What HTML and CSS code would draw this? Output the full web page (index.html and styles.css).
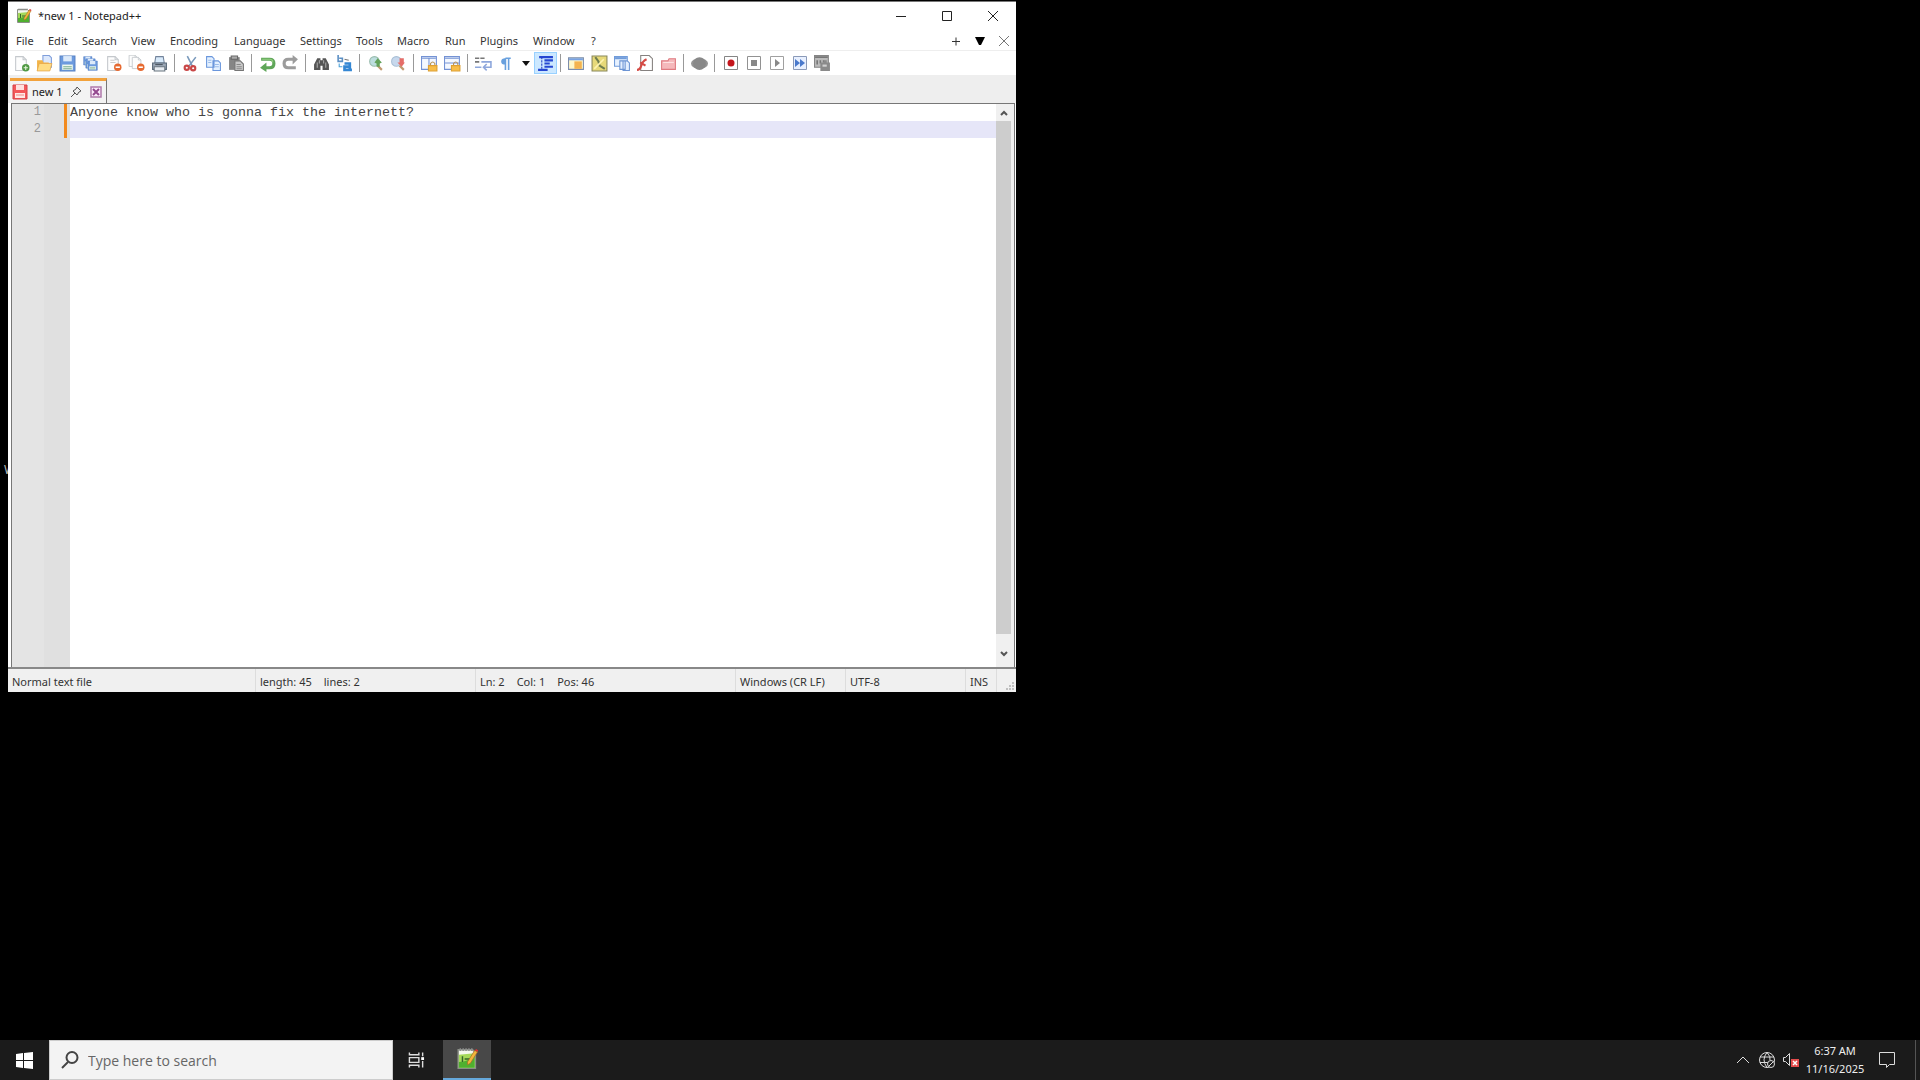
FILE: index.html
```html
<!DOCTYPE html>
<html lang="en">
<head>
<meta charset="utf-8">
<title>*new 1 - Notepad++</title>
<link rel="stylesheet" href="styles.css">
</head>
<body>
<svg class="sprite" aria-hidden="true">
  <symbol id="npp" viewBox="0 0 16 16"><path d="M1.500 1.500h10l2 2v11h-12z" fill="#f4f7ee" stroke="#8a8f86"/><path d="M3 .500v2M5 .500v2M7 .500v2M9 .500v2M11 .500v2" stroke="#8d8d8d"/><path d="M2 5l11-1v10H2z" fill="#a5d95a"/><path d="M2 10q7 0 11-5v9H2z" fill="#4fb02f"/><path d="M4.500 6v4M6 8h4" stroke="#35662a"/><path d="M8 10l5-8 2 1-5 8-2 1z" fill="#f3b53a" stroke="#a56b2a" stroke-width=".5"/><path d="M13 2l1-1 1.500 1-.500 1z" fill="#d33"/></symbol>
  <symbol id="page" viewBox="0 0 16 16"><path d="M2.500 1.500h7l3 3v10h-10z" fill="#fdfdfd" stroke="#c4c8cc"/><path d="M9.500 1.500v3h3" fill="none" stroke="#c4c8cc"/></symbol>
  <symbol id="floppy" viewBox="0 0 16 16"><path d="M1 1h14v14H1z" fill="#6c9ade" stroke="#5580c4"/><path d="M4 1h8v5H4z" fill="#dceafa"/><path d="M3 9h10v5H3z" fill="#eef8ee"/><path d="M4 11h8M4 13h8" stroke="#79ac91"/></symbol>
  <symbol id="copy" viewBox="0 0 16 16"><path d="M1.500 1.500h5l2 2v8h-7zM7.500 5.500h5l2 2v7h-7z" fill="#e3f0ff" stroke="#6a96dc"/><path d="M3 5h3M3 7h3M9 9h4M9 11h4" stroke="#9abbea"/></symbol>
  <symbol id="lock" viewBox="0 0 16 16"><path d="M9 10V8q2-3 4 0v2" fill="none" stroke="#b99355"/><path d="M7 10h8v5H7z" fill="#f8bd47" stroke="#dda032"/></symbol>
</svg>

<div class="screen">
<main class="desktop">
  <span class="shortcut">W</span>
  <section class="window" aria-label="Notepad++">
    <header class="titlebar">
      <svg class="app-icon"><use href="#npp"/></svg>
      <h1>*new 1 - Notepad++</h1>
      <div class="caption-buttons">
        <button aria-label="Minimize"><svg viewBox="0 0 12 12"><path d="M1 6.500h10"/></svg></button>
        <button aria-label="Maximize"><svg viewBox="0 0 12 12"><path d="M1.500 1.500h9v9h-9z"/></svg></button>
        <button aria-label="Close"><svg viewBox="0 0 12 12"><path d="M1 1l10 10M11 1L1 11"/></svg></button>
      </div>
    </header>

    <nav class="menubar">
      <div class="menus">
        <button>File</button><button>Edit</button><button>Search</button><button>View</button><button>Encoding</button><button>Language</button><button>Settings</button><button>Tools</button><button>Macro</button><button>Run</button><button>Plugins</button><button>Window</button><button>?</button>
      </div>
      <div class="tab-actions">
        <button aria-label="New tab"><svg viewBox="0 0 10 10"><path d="M1 5.500h8M5 1.500v8" stroke="#333"/></svg></button>
        <button aria-label="Tab list"><svg viewBox="0 0 10 10"><path d="M0 1h10L6 9H4z" fill="#000"/></svg></button>
        <button aria-label="Close tab"><svg viewBox="0 0 10 10"><path d="M0 0l10 10M10 0L0 10" stroke="#777"/></svg></button>
      </div>
    </nav>

    <div class="toolbar">
      <button aria-label="New"><svg viewBox="0 0 16 16"><use href="#page"/><circle cx="12" cy="12" r="3.500" fill="#509943"/><path d="M10 12h4M12 10v4" stroke="#e8f7de"/></svg></button>
      <button aria-label="Open"><svg viewBox="0 0 16 16"><path d="M6.500.500h6l2 2v9h-8z" fill="#dce8fc" stroke="#7f9edb"/><path d="M1 5h5l1 2h5v8H1z" fill="#f3b448"/><path d="M1 15l2-7h12l-2 7z" fill="#ffdc83" stroke="#e6a546" stroke-width=".7"/></svg></button>
      <button aria-label="Save"><svg><use href="#floppy"/></svg></button>
      <button aria-label="Save all"><svg viewBox="0 0 16 16"><use href="#floppy" x="1" y="1" width="9" height="9"/><use href="#floppy" x="3" y="3" width="10" height="10"/><use href="#floppy" x="5" y="5" width="10" height="10"/></svg></button>
      <button aria-label="Close file"><svg viewBox="0 0 16 16"><use href="#page"/><path d="M5 5h4M5 7h5" stroke="#ccc"/><circle cx="12" cy="11.500" r="3.500" fill="#e66a31"/><path d="M10 11.500h4" stroke="#fff" stroke-width="1.500"/></svg></button>
      <button aria-label="Close all files"><svg viewBox="0 0 16 16"><use href="#page" x="-1" y="-1" width="13" height="13"/><use href="#page" x="2" y="1" width="13" height="13"/><circle cx="12" cy="11.500" r="3.500" fill="#e66a31"/><path d="M10 11.500h4" stroke="#fff" stroke-width="1.500"/></svg></button>
      <button aria-label="Print"><svg viewBox="0 0 16 16"><path d="M4.500 1.500h7l1 6h-9z" fill="#d8eafa" stroke="#73849b"/><path d="M1.500 7.500h13v6h-13z" fill="#9ba7b6" stroke="#586878"/><path d="M3 11h10v4H3z" fill="#e8edf2" stroke="#68747f"/><path d="M4 9h7" stroke="#4c5660"/></svg></button>
      <i></i>
      <button aria-label="Cut"><svg viewBox="0 0 16 16"><path d="M5 1l5 10M13 2L6 11" stroke="#7a9abc" stroke-width="1.500"/><circle cx="4.500" cy="12" r="2" fill="none" stroke="#c94747" stroke-width="2"/><circle cx="10.500" cy="12.500" r="2" fill="none" stroke="#c94747" stroke-width="2"/></svg></button>
      <button aria-label="Copy"><svg><use href="#copy"/></svg></button>
      <button aria-label="Paste"><svg viewBox="0 0 16 16"><path d="M1 2h10v12H1z" fill="#858585"/><path d="M3 1h6v3H3z" fill="#aaa" stroke="#666"/><path d="M6.500 5.500h5l3 3v6h-8z" fill="#c9c9c9" stroke="#757575"/><path d="M8 9h4M8 11h5M8 13h5" stroke="#888"/></svg></button>
      <i></i>
      <button aria-label="Undo"><svg viewBox="0 0 16 16"><path d="M2 4h8q4 0 4 4t-4 4H6" fill="none" stroke="#5fa659" stroke-width="3"/><path d="M1 12l6-5v9z" fill="#5fa659"/><path d="M3 4h7q3 0 3 3" fill="none" stroke="#95cf81"/></svg></button>
      <button aria-label="Redo"><svg viewBox="0 0 16 16"><path d="M13 12H6q-4 0-4-4t4-4h5" fill="none" stroke="#9c9c9c" stroke-width="3"/><path d="M10 0l5 4-5 5z" fill="#9c9c9c"/></svg></button>
      <i></i>
      <button aria-label="Find"><svg viewBox="0 0 16 16"><path d="M4 3h3v2h2V3h3l3 6v5H9v-4H7v4H1V9z" fill="#555"/><path d="M4 7v5M12 7v5M6 5v3M10 5v3" stroke="#aaa"/></svg></button>
      <button aria-label="Replace"><svg viewBox="0 0 16 16"><path d="M2 0v6h4V3H3" fill="none" stroke="#5b8fc4" stroke-width="1.500"/><path d="M8 8h5v6H8v-3h5M14 14h1" fill="none" stroke="#3487d4" stroke-width="2.500"/><path d="M3 8v3h3" fill="none" stroke="#48a0d8"/><path d="M8 4l4 1" stroke="#777"/></svg></button>
      <i></i>
      <button aria-label="Zoom in"><svg viewBox="0 0 16 16"><circle cx="7" cy="6" r="4.500" fill="#bddedf" stroke="#9abcae"/><path d="M10 10l4 4" stroke="#c19a70" stroke-width="2"/><path d="M10 3l4 4-2 1v3H9V8L7 7z" fill="#63a25a"/></svg></button>
      <button aria-label="Zoom out"><svg viewBox="0 0 16 16"><circle cx="6" cy="6" r="4.500" fill="#c7d8ed" stroke="#aac0d6"/><path d="M9 10l4 4" stroke="#c19a70" stroke-width="2"/><path d="M7 7h7l-3 4zM9 3h4v4H9z" fill="#e56d68"/></svg></button>
      <i></i>
      <button aria-label="Synchronize vertical scrolling"><svg viewBox="0 0 16 16"><path d="M.500 1.500h14v12H.500z" fill="#f4f8ff" stroke="#7492d4"/><path d="M1 3h13M7.500 3v10" stroke="#7492d4"/><use href="#lock"/></svg></button>
      <button aria-label="Synchronize horizontal scrolling"><svg viewBox="0 0 16 16"><path d="M.500 1.500h14v12H.500z" fill="#f4f8ff" stroke="#7492d4"/><path d="M1 3h13M1 7.500h13" stroke="#7492d4"/><use href="#lock"/></svg></button>
      <i></i>
      <button aria-label="Word wrap"><svg viewBox="0 0 16 16"><path d="M0 3h10M0 6.500h5" stroke="#777" stroke-width="1.500" stroke-dasharray="4 1"/><path d="M0 11.500h6M6 6.500h9v5H9m2-3l-3 3 3 3" fill="none" stroke="#8ea7dc" stroke-width="1.500"/></svg></button>
      <button aria-label="Show all characters"><svg viewBox="0 0 16 16"><path d="M7 3h5M7 3v11M10 3v11" stroke="#68a0de" stroke-width="1.500"/><path d="M7 3q-4 0-4 3t4 3z" fill="#68a0de"/></svg></button>
      <button class="more" aria-label="Character options"><svg viewBox="0 0 16 16"><path d="M4 6h8l-4 5z" fill="#111"/></svg></button>
      <button class="pressed" aria-label="Indent guide"><svg viewBox="0 0 16 16"><path d="M2 2h13M7 5h8M7 8h5M7 11h8M1 14h9" stroke="#2546d2" stroke-width="2"/><path d="M4.500 2v12" stroke="#253cc3" stroke-dasharray="2 1"/></svg></button>
      <i></i>
      <button aria-label="User-defined language"><svg viewBox="0 0 16 16"><path d="M.500 2.500h14v11H.500z" fill="#fff7c9" stroke="#7c8dac"/><path d="M1 4h13" stroke="#79a2e2" stroke-width="2"/><path d="M6 6h7v7H6z" fill="#f4b34e"/></svg></button>
      <button aria-label="Document map"><svg viewBox="0 0 16 16"><path d="M1 1h14v14H1z" fill="#e7d979" stroke="#888759"/><path d="M4 2l3 4 1 4 5 3" fill="none" stroke="#6f7d4f" stroke-width="2"/><path d="M3 13l9-9" stroke="#fff4b0" stroke-width="1.500"/></svg></button>
      <button aria-label="Document list"><svg viewBox="0 0 16 16"><path d="M.500 1.500h12v9H.500z" fill="#e8f2ff" stroke="#719cda"/><path d="M1 3h11" stroke="#719cda" stroke-width="2"/><path d="M5.500 5.500h5v8h-5zM8.500 5.500h4l2 2v7h-6z" fill="#e4efff" stroke="#6c94d4"/></svg></button>
      <button aria-label="Function list"><svg viewBox="0 0 16 16"><path d="M3.500.500h8l3 3v11h-11z" fill="#fff" stroke="#85817f"/><path d="M0 14q3 0 4-4t5-6M3 7l5 3" fill="none" stroke="#d54b45" stroke-width="2"/></svg></button>
      <button aria-label="Folder as workspace"><svg viewBox="0 0 16 16"><path d="M1.500 5.500h6l1-2h6v10h-13z" fill="#f5b8bb" stroke="#df7b81"/><path d="M3 7h10" stroke="#ffe4e4"/></svg></button>
      <i></i>
      <button aria-label="Monitoring"><svg viewBox="0 0 16 16"><ellipse cx="8" cy="8" rx="8" ry="5" fill="#949494"/><circle cx="8" cy="8" r="6" fill="#888"/></svg></button>
      <i></i>
      <button aria-label="Record macro"><svg class="small" viewBox="0 0 14 14"><path d="M.500.500h13v13H.500z" fill="#fff" stroke="#858585"/><circle cx="7" cy="7" r="3.500" fill="#c5161d"/></svg></button>
      <button aria-label="Stop recording"><svg class="small" viewBox="0 0 14 14"><path d="M.500.500h13v13H.500z" fill="#fff" stroke="#929292"/><path d="M4 4h6v6H4z" fill="#888"/></svg></button>
      <button aria-label="Play macro"><svg class="small" viewBox="0 0 14 14"><path d="M.500.500h13v13H.500z" fill="#fff" stroke="#a0a0a0"/><path d="M5 3l5 4-5 4z" fill="#888"/></svg></button>
      <button aria-label="Run macro multiple times"><svg class="small" viewBox="0 0 14 14"><path d="M.500.500h13v13H.500z" fill="#e8f0ff" stroke="#8b9ab8"/><path d="M2 3l5 4-5 4zM7 3l5 4-5 4z" fill="#4979cc"/></svg></button>
      <button aria-label="Save macro"><svg viewBox="0 0 16 16"><path d="M.500.500h13v11H.500z" fill="#bbb" stroke="#858585"/><path d="M1 2h12M3 5v4M6 5v3M9 5v2" fill="none" stroke="#777" stroke-width="1.500"/><path d="M6 7h3V5h3v2h3v8H6z" fill="#8a8a8a"/><path d="M8 9h4v2H8z" fill="#d0d0d0"/></svg></button>
    </div>

    <div class="tabbar">
      <div class="tab">
        <svg class="unsaved" viewBox="0 0 16 16"><path d="M1 1h14v14H1z" fill="#f3595b" stroke="#d64246"/><path d="M4 1h8v5H4z" fill="#ffe0de"/><path d="M3 9h10v5H3z" fill="#ffe9e6"/><path d="M4 11h8" stroke="#ee8a88"/></svg>
        <span>new 1</span>
        <button aria-label="Pin tab"><svg viewBox="0 0 12 12"><path d="M7 1l4 4-2 1-2 3-4-4 3-2zM5 7l-4 4" fill="#eee" stroke="#555"/></svg></button>
        <button aria-label="Close new 1"><svg viewBox="0 0 12 12"><path d="M1 1h10v10H1z" fill="#fbeafa" stroke="#b07aab" stroke-width="1.500"/><path d="M3 3l6 6M9 3L3 9" stroke="#93488e" stroke-width="2"/></svg></button>
      </div>
    </div>

    <div class="editor">
      <div class="numbers"><span>1</span><span>2</span></div>
      <div class="folds"></div>
      <div class="code"><p>Anyone know who is gonna fix the internett?</p><p class="current"></p></div>
      <div class="scrollbar">
        <button aria-label="Scroll up"><svg viewBox="0 0 8 6"><path d="M1 5l3-3 3 3"/></svg></button>
        <div class="thumb"></div>
        <button aria-label="Scroll down"><svg viewBox="0 0 8 6"><path d="M1 1l3 3 3-3"/></svg></button>
      </div>
    </div>

    <footer class="statusbar">
      <div>Normal text file</div>
      <div><span>length: 45</span><span>lines: 2</span></div>
      <div><span>Ln: 2</span><span>Col: 1</span><span>Pos: 46</span></div>
      <div>Windows (CR LF)</div>
      <div>UTF-8</div>
      <div>INS</div>
      <div class="grip"><svg viewBox="0 0 10 10"><path d="M7 1h2v2H7zM7 4h2v2H7zM7 7h2v2H7zM4 4h2v2H4zM4 7h2v2H4zM1 7h2v2H1z" fill="#bfbfbf"/></svg></div>
    </footer>
  </section>
</main>

<footer class="taskbar">
  <button class="start" aria-label="Start"><svg viewBox="0 0 17 17"><path d="M0 2l7-1v7H0zM8 1l9-1v8H8zM0 9h7v7l-7-1zM8 9h9v8l-9-1z" fill="#fff"/></svg></button>
  <label class="search">
    <svg viewBox="0 0 18 18"><circle cx="11" cy="6.500" r="5.500"/><path d="M7 11l-6 6"/></svg>
    <input type="text" placeholder="Type here to search" aria-label="Search">
  </label>
  <button class="taskview" aria-label="Task view"><svg viewBox="0 0 18 16" fill="none" stroke="#ddd"><path d="M1.500 0v2.500h10V0M1.500 5.500h10v5h-10zM1.500 16v-2.500h10V16M15.500 0v4M15.500 9v7" stroke-width="1.500"/><path d="M14 5h3v3h-3z" fill="#fff" stroke="none"/></svg></button>
  <button class="running" aria-label="Notepad++"><svg><use href="#npp"/></svg></button>
  <div class="tray">
    <button aria-label="Show hidden icons"><svg viewBox="0 0 16 16"><path d="M2 11l6-6 6 6"/></svg></button>
    <button aria-label="Network"><svg viewBox="0 0 16 16"><path d="M8 .500a7 7 0 1 0 0 15a7 7 0 1 0 0-15M8 .500q-6 7 0 15M8 .500q4 4 3 8M1 5h14M1 10.500h8"/><circle cx="12" cy="12" r="3.500" fill="#1b1b1b"/><path d="M9.500 14.500l5-5"/></svg></button>
    <button aria-label="Volume muted"><svg viewBox="0 0 16 16"><path d="M.500 5.500h2l4-4v12l-4-4h-2z"/><path d="M8 7h8v8H8z" fill="#e34b4b" stroke="none"/><path d="M10 9l4 4M14 9l-4 4" stroke="#fff" stroke-width="1.500"/></svg></button>
    <button class="clock"><span>6:37 AM</span><span>11/16/2025</span></button>
    <button class="notices" aria-label="Notifications"><svg viewBox="0 0 18 18"><path d="M1.500 1.500h15v12h-5l-3 3v-3h-7z"/></svg></button>
    <button class="peek" aria-label="Show desktop"></button>
  </div>
</footer>
</div>
</body>
</html>
```
FILE: styles.css
```css
* { box-sizing: border-box; }
body { margin: 0; background: #000; font: 11px/16px "Noto Sans", "Open Sans", sans-serif; color: #333; }
button { padding: 0; border: 0; background: none; font: inherit; color: inherit; display: flex; align-items: center; justify-content: center; }
svg { display: block; flex: none; }
.sprite { position: absolute; width: 0; height: 0; }
.screen { min-height: 100vh; display: flex; flex-direction: column; }
.desktop { flex: 1; position: relative; overflow: hidden; }
.shortcut { position: absolute; left: 4px; top: 462px; font-size: 12px; color: #bbb; }

.window { position: absolute; left: 8px; top: 1px; width: 52.5%; height: 64vh; display: flex; flex-direction: column; background: #fff; border-top: 1px solid #777; overflow: hidden; }
.titlebar { display: flex; align-items: center; height: 28px; padding-left: 8px; }
.app-icon { width: 16px; height: 16px; }
h1 { margin: 0 0 0 6px; font-size: 11px; font-weight: 400; flex: 1; color: #222; }
.caption-buttons { display: flex; }
.caption-buttons button { width: 46px; height: 28px; }
.caption-buttons svg { width: 12px; height: 12px; fill: none; stroke: #222; }

.menubar { display: flex; justify-content: space-between; height: 21px; padding-top: 2px; border-bottom: 1px solid #eee; }
.menus { display: grid; grid-template-columns: 32px 34px 49px 39px 64px 66px 56px 41px 48px 35px 53px 58px 20px; padding-left: 8px; }
.menus button { justify-content: flex-start; }
.tab-actions { display: flex; padding-right: 7px; gap: 14px; }
.tab-actions svg { width: 10px; height: 10px; }

.toolbar { display: flex; align-items: center; height: 24px; padding-left: 2px; }
.toolbar button { width: 23px; height: 22px; }
.toolbar svg { width: 17px; height: 17px; }
.toolbar .small { width: 14px; height: 14px; }
.toolbar .more { width: 16px; }
.toolbar .more svg { width: 16px; height: 16px; }
.toolbar .pressed { background: #cce8ff; border: 1px solid #99d1ff; }
.toolbar i { width: 8px; height: 18px; border-left: 1px solid #999; margin-left: 3px; margin-right: -3px; }

.tabbar { height: 28px; background: #eee; display: flex; align-items: flex-end; padding-left: 2px; }
.tab { display: flex; align-items: center; width: 97px; height: 25px; padding: 0 0 1px 2px; background: #f3f3f3; border-top: 3px solid #f2a23c; border-right: 1px solid #777; }
.unsaved { width: 16px; height: 16px; }
.tab span { width: 38px; padding-left: 4px; color: #222; }
.tab button { width: 20px; }
.tab button svg { width: 12px; height: 12px; }

.editor { flex: 1; display: flex; margin: 0 1px 0 3px; border: 1px solid #777; border-bottom: 0; font: 10pt/17px "Liberation Mono", monospace; }
.numbers { width: 32px; padding: 0 3px 0 0; background: #e4e4e4; display: flex; flex-direction: column; text-align: right; font-size: 12px; color: #999; }
.folds { width: 26px; background: linear-gradient(#f28a1c, #f28a1c) 20px 0 / 3px 34px no-repeat, #e0e0e0; }
.code { flex: 1; color: #444; }
.code p { margin: 0; height: 17px; }
.code .current { background: #e6e6f8; }
.scrollbar { width: 18px; padding-right: 3px; display: flex; flex-direction: column; background: #f0f0f0; }
.scrollbar button { height: 17px; }
.scrollbar svg { width: 8px; height: 6px; fill: none; stroke: #555; stroke-width: 2; }
.thumb { flex: 1; background: #cdcdcd; }
.scrollbar button:last-child { height: 33px; padding-top: 6px; }

.statusbar { display: grid; grid-template-columns: 248px 220px 1fr 110px 120px 31px 19px; height: 25px; background: #f0f0f0; border-top: 2px solid #888; }
.statusbar div { display: flex; align-items: center; gap: 12px; padding: 2px 0 0 4px; border-right: 1px solid #ddd; white-space: nowrap; }
.statusbar .grip { border: 0; align-items: flex-end; justify-content: flex-end; padding: 0 1px 1px 0; }
.grip svg { width: 10px; height: 10px; }

.taskbar { display: flex; height: 40px; background: #1b1b1b; color: #eee; }
.start { width: 49px; }
.start svg { width: 17px; height: 17px; }
.search { display: flex; align-items: center; width: 344px; padding-left: 11px; gap: 9px; background: #f3f3f3; border: 1px solid #ccc; }
.search svg { width: 18px; height: 18px; fill: none; stroke: #444; stroke-width: 2; }
.search input { flex: 1; min-width: 0; padding: 2px 0 0; border: 0; background: none; outline: 0; font: 14px/20px "Open Sans", "Noto Sans", sans-serif; }
.search input::placeholder { color: #666; opacity: 1; }
.taskview { width: 47px; }
.taskview svg { width: 17px; height: 16px; }
.running { width: 48px; margin-left: 3px; background: #484848; border-bottom: 2px solid #66a9dc; }
.running svg { width: 23px; height: 24px; }
.tray { display: flex; margin-left: auto; }
.tray button { width: 24px; }
.tray svg { width: 16px; height: 16px; fill: none; stroke: #ddd; }
.tray .clock { width: 64px; flex-direction: column; }
.clock span { line-height: 18px; }
.tray .notices { width: 40px; }
.notices svg { width: 18px; height: 18px; }
.tray .peek { width: 5px; margin-left: 8px; border-left: 1px solid #555; }
```
